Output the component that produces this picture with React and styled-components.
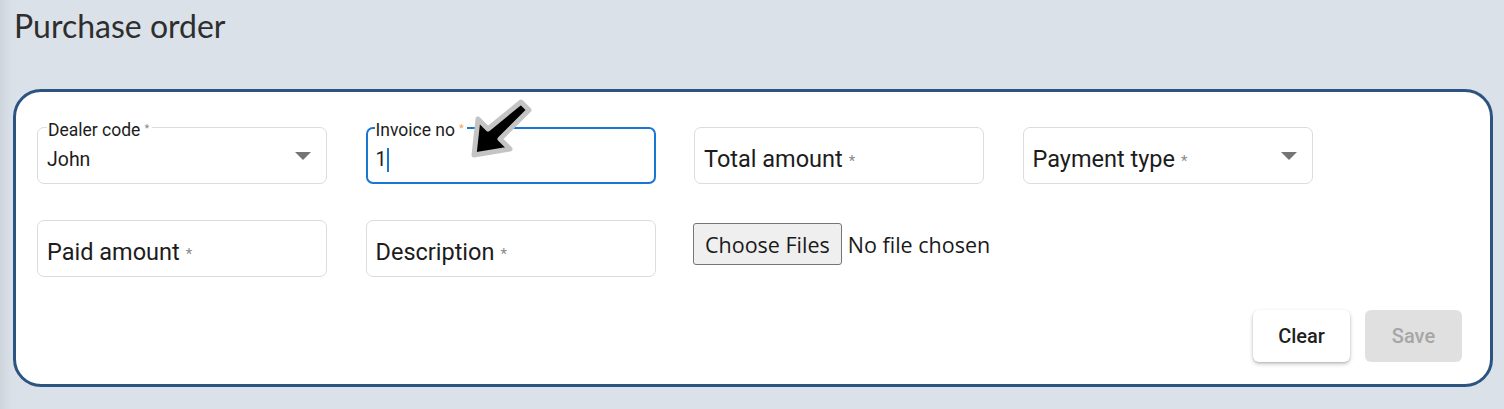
import styled, { createGlobalStyle, css } from "styled-components";

const GlobalStyle = createGlobalStyle`
  html, body {
    margin: 0;
    padding: 0;
  }
  body {
    background: linear-gradient(to right, #cdd4db 0px, #d8dfe6 10px, #dae1e8 14px);
    font-family: Roboto, "Liberation Sans", Arial, sans-serif;
  }
`;

export default function App() {
  return (
    <>
      <GlobalStyle />
      <Page>
        <Title>Purchase order</Title>
        <Card>
          <Grid>
            <Field label="Dealer code" value="John" shrink select />
            <Field label="Invoice no" value="1" shrink focused>
              <Pointer />
            </Field>
            <Field label="Total amount" />
            <Field label="Payment type" select />
            <Field label="Paid amount" />
            <Field label="Description" />
            <FileRow>
              <FileButton type="button">Choose Files</FileButton>
              <FileText>No file chosen</FileText>
            </FileRow>
          </Grid>
          <Actions>
            <Button>Clear</Button>
            <Button disabled>Save</Button>
          </Actions>
        </Card>
      </Page>
    </>
  );
}

function Field({ label, value, shrink, focused, select, children }) {
  return (
    <Box $focused={focused}>
      <Label $shrink={shrink} $focused={focused}>
        {label}
        <Star $shrink={shrink} $focused={focused}>*</Star>
      </Label>
      {value && (
        <Value $focused={focused}>
          {value}
          {focused && <Caret />}
        </Value>
      )}
      {select && (
        <Caret2 viewBox="0 0 16 8">
          <path d="M0 0 L16 0 L8 8 Z" fill="#757575" />
        </Caret2>
      )}
      {children}
    </Box>
  );
}

function Pointer() {
  return (
    <ArrowSvg viewBox="0 0 64 64">
      <path
        d="M52 6 L60 14 L31 43 L41 53 L5 59 L9 23 L19 33 Z"
        fill="#000"
        stroke="#c4c4c4"
        strokeWidth="5"
        strokeLinejoin="round"
      />
    </ArrowSvg>
  );
}

const Page = styled.div`
  padding: 4px 11px 22px 13px;
`;

const Title = styled.h1`
  margin: 0 0 0 1px;
  font-family: Lato, "Noto Sans", sans-serif;
  font-weight: 400;
  font-size: 32px;
  line-height: 44px;
  color: #2e2e2e;
`;

const Card = styled.div`
  margin-top: 41px;
  background: #fff;
  border: 3px solid #2b5580;
  border-radius: 28px;
  padding: 35px 28px 22px 21px;
`;

const Grid = styled.div`
  display: grid;
  grid-template-columns: repeat(4, 290px);
  column-gap: 38.5px;
  row-gap: 36px;
`;

const Box = styled.div`
  position: relative;
  height: 57px;
  box-sizing: border-box;
  border: 1px solid #dcdcdc;
  border-radius: 7px;
  ${(p) =>
    p.$focused &&
    css`
      border: 2px solid #1976d2;
    `}
`;

const Label = styled.label`
  position: absolute;
  left: ${(p) => (p.$focused ? "7px" : "9px")};
  white-space: nowrap;
  color: #1c1c1c;
  ${(p) =>
    p.$shrink
      ? css`
          top: ${p.$focused ? "-10px" : "-9px"};
          font-size: 17.5px;
          line-height: 20px;
          background: #fff;
          padding: 0 3px 0 1px;
        `
      : css`
          top: 16px;
          font-size: 23.5px;
          line-height: 30px;
        `}
`;

const Star = styled.span`
  margin-left: ${(p) => (p.$shrink ? "4px" : "6px")};
  font-size: ${(p) => (p.$shrink ? "11px" : "15px")};
  vertical-align: ${(p) => (p.$shrink ? "4px" : "1px")};
  color: ${(p) => (p.$focused ? "#f5a54a" : "#8a8a8a")};
`;

const Value = styled.div`
  position: absolute;
  left: ${(p) => (p.$focused ? "8px" : "9px")};
  top: ${(p) => (p.$focused ? "19px" : "20px")};
  font-size: 19.5px;
  line-height: 24px;
  color: #1c1c1c;
  display: flex;
  align-items: center;
`;

const Caret = styled.span`
  display: inline-block;
  width: 2px;
  height: 24px;
  margin-left: 1px;
  background: #1976d2;
`;

const Caret2 = styled.svg`
  position: absolute;
  right: 15px;
  top: 24px;
  width: 16px;
  height: 8px;
`;

const ArrowSvg = styled.svg`
  position: absolute;
  left: 101px;
  top: -33px;
  width: 64px;
  height: 64px;
`;

const FileRow = styled.div`
  display: flex;
  align-items: center;
  gap: 6px;
  height: 50px;
  margin-top: -1px;
  margin-left: -1px;
  white-space: nowrap;
`;

const FileButton = styled.button`
  flex-shrink: 0;
  height: 42px;
  padding: 0 11px;
  background: #efefef;
  border: 1px solid #767676;
  border-radius: 3px;
  font-family: "Open Sans", "Noto Sans", sans-serif;
  font-size: 21.5px;
  color: #1a1a1a;
  white-space: nowrap;
`;

const FileText = styled.span`
  flex-shrink: 0;
  font-family: "Open Sans", "Noto Sans", sans-serif;
  font-size: 21.5px;
  color: #1a1a1a;
`;

const Actions = styled.div`
  display: flex;
  justify-content: flex-end;
  gap: 15px;
  margin-top: 33px;
`;

const Button = styled.button`
  width: 97px;
  height: 52px;
  border: none;
  border-radius: 6px;
  font-family: Roboto, "Liberation Sans", sans-serif;
  font-size: 20px;
  font-weight: 500;
  background: #fff;
  color: #1f1f1f;
  box-shadow: 0 2px 4px rgba(0, 0, 0, 0.22), 0 1px 2px rgba(0, 0, 0, 0.12);
  &:disabled {
    background: #e0e0e0;
    color: #a6a6a6;
    box-shadow: none;
  }
`;
